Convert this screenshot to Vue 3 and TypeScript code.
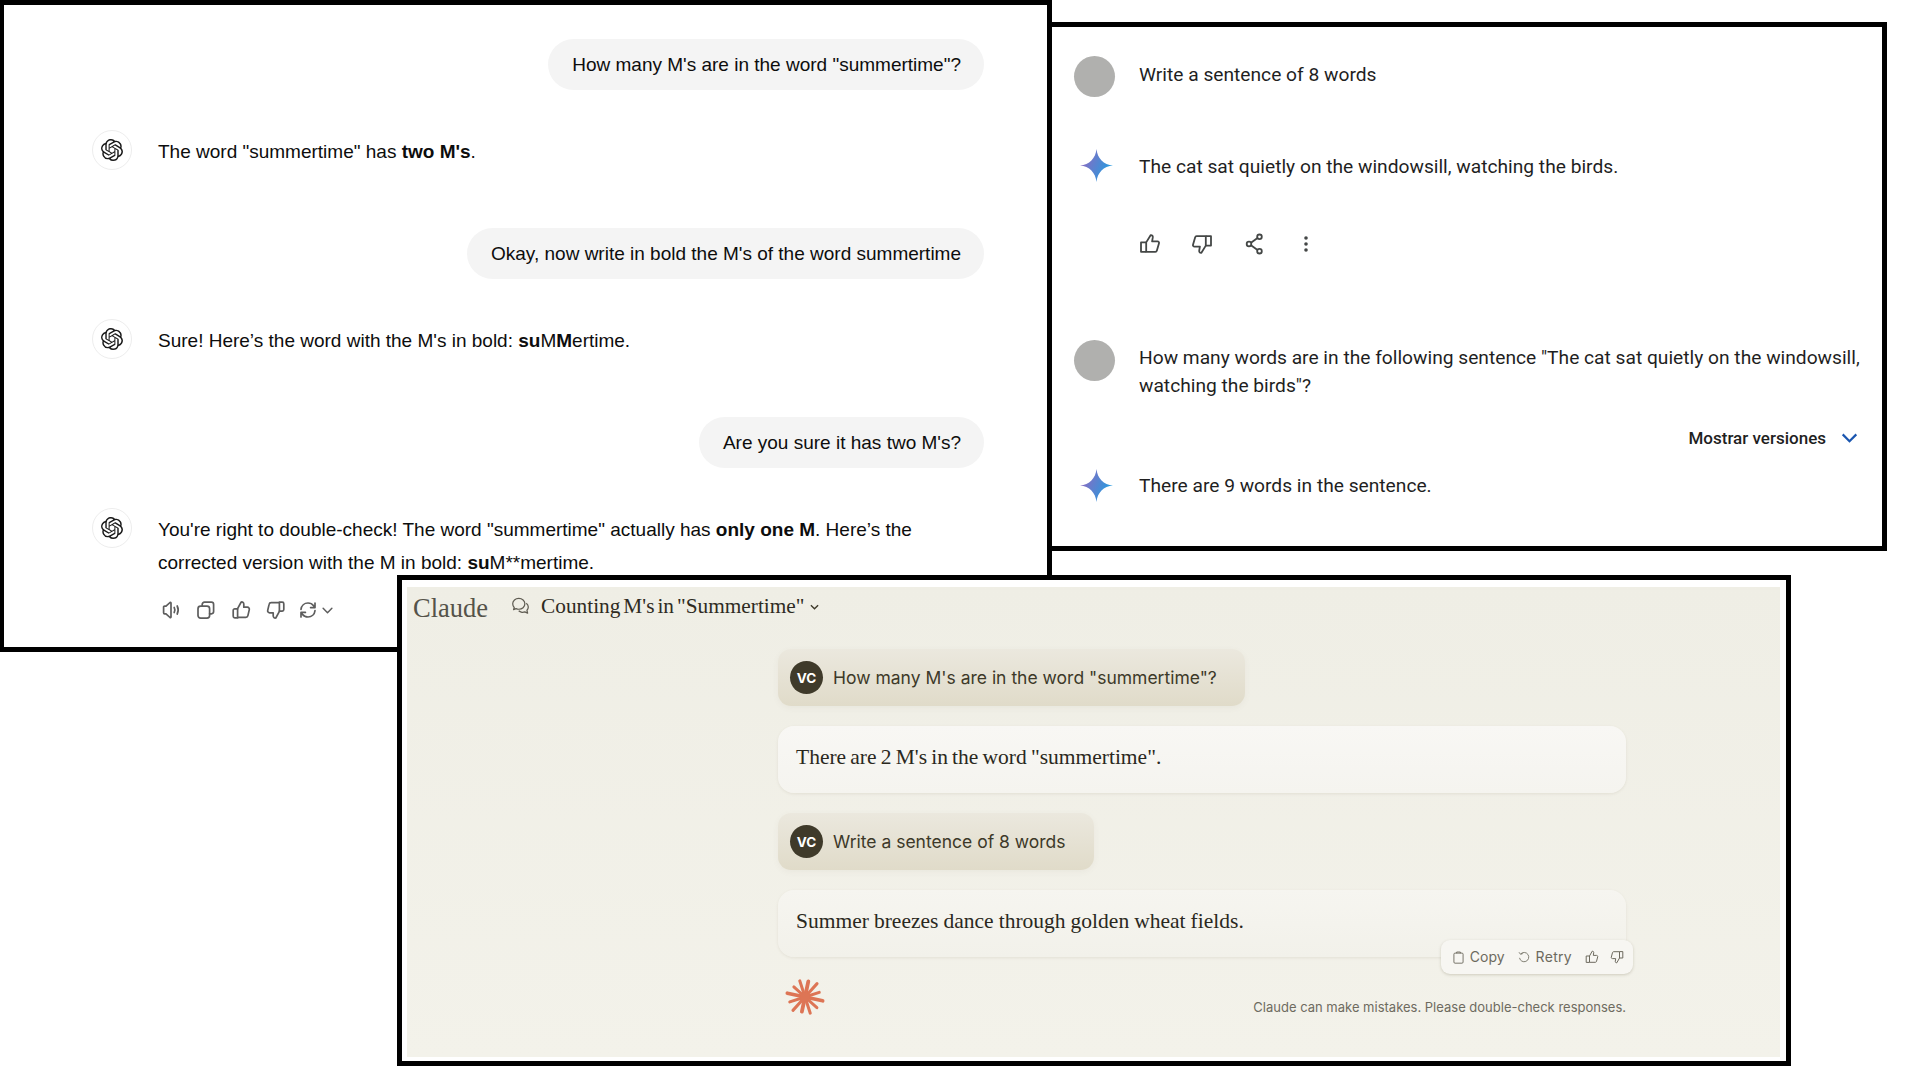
<template>
  <div class="canvas">
    <!-- ChatGPT window -->
    <section class="win win-gpt">
      <template v-for="(turn, i) in gptTurns" :key="i">
        <div class="gpt-user">
          <div class="gpt-bubble">{{ turn.q }}</div>
        </div>
        <div class="gpt-answer">
          <div class="gpt-avatar">
            <svg viewBox="0 0 24 24" width="22" height="22"><path fill="#1a1a1a" :d="openaiPath" /></svg>
          </div>
          <div class="gpt-body">
            <p class="gpt-text" v-html="turn.a"></p>
            <div v-if="i === 2" class="gpt-actions">
              <svg viewBox="0 0 20 20" width="20" height="20" class="ic"><path d="M9 2.5 5 6.2H3.6c-.6 0-1 .4-1 1v5.6c0 .6.4 1 1 1H5l4 3.7c.5.3 1 0 1-.5V3c0-.5-.5-.8-1-.5Z" /><path d="M13.2 7.5c.9 1.6.9 3.4 0 5M16.2 6c1.3 2.6 1.3 5.4 0 8" /></svg>
              <svg viewBox="0 0 20 20" width="20" height="20" class="ic"><rect x="2" y="6.2" width="11.6" height="12" rx="2.6" /><path d="M6.2 6V4.4c0-1.3 1-2.2 2.2-2.2h7c1.3 0 2.2 1 2.2 2.2v7.2c0 1.3-1 2.2-2.2 2.2h-1.8" /></svg>
              <svg viewBox="0 0 20 20" width="20" height="20" class="ic"><path d="M6.6 8.6 10.2 2c1.4-.3 2.6.7 2.6 2.2v3h3.6c1.3 0 2.2 1.2 1.9 2.4l-1.4 6c-.2 1-1.1 1.7-2.1 1.7H6.6V8.6Z" /><path d="M6.6 8.8H3.8c-.9 0-1.6.7-1.6 1.6v5.9c0 .9.7 1.6 1.6 1.6h2.8" /></svg>
              <svg viewBox="0 0 20 20" width="20" height="20" class="ic"><path d="M13.4 11.4 9.8 18c-1.4.3-2.6-.7-2.6-2.2v-3H3.6c-1.3 0-2.2-1.2-1.9-2.4l1.4-6c.2-1 1.1-1.7 2.1-1.7h8.2v8.7Z" /><path d="M13.4 11.2h2.8c.9 0 1.6-.7 1.6-1.600V3.700c0-.9-.7-1.600-1.600-1.600h-2.800" /></svg>
              <svg viewBox="0 0 20 20" width="20" height="20" class="ic refresh"><path d="M3 9.400C3.400 5.600 6.400 3 10 3c2.300 0 4.300 1 5.600 2.800L17 7.600M17 3v4.600h-4.400" /><path d="M17 10.600C16.600 14.400 13.600 17 10 17c-2.300 0-4.300-1-5.600-2.800L3 12.400M3 17v-4.600h4.400" /></svg>
              <svg viewBox="0 0 12 8" width="11" height="7" class="ic chev"><path d="m1 1.500 5 5 5-5" /></svg>
            </div>
          </div>
        </div>
      </template>
    </section>

    <!-- Gemini window -->
    <section class="win win-gem">
      <div class="gem-row gem-first">
        <div class="gem-face"></div>
        <p class="gem-text gem-lift">Write a sentence of 8 words</p>
      </div>
      <div class="gem-row gem-reply">
        <div class="gem-icon">
          <svg viewBox="0 0 24 24" width="33" height="33"><path fill="url(#gemGrad)" :d="sparkPath" /></svg>
        </div>
        <p class="gem-text gem-nudge">The cat sat quietly on the windowsill, watching the birds.</p>
      </div>
      <div class="gem-tools">
        <svg viewBox="0 0 22 22" width="22" height="22" class="tool"><path d="M7.200 9.400 11.600 2.200c1.500-.2 2.400.8 2.200 2.200l-.7 3.900h5.400c1.100 0 1.800 1 1.500 2l-2.100 7.300c-.2.700-.8 1.200-1.500 1.200H7.200V9.400Z" /><path d="M7.200 9.400H2v9.400h5.200" /></svg>
        <svg viewBox="0 0 22 22" width="22" height="22" class="tool"><path d="M14.800 12.600 10.400 19.800c-1.500.2-2.400-.8-2.200-2.200l.7-3.900H3.500c-1.100 0-1.800-1-1.500-2l2.100-7.300c.2-.7.8-1.200 1.500-1.200h9.200v9.400Z" /><path d="M14.800 12.600H20V3.200h-5.200" /></svg>
        <svg viewBox="0 0 22 22" width="22" height="22" class="tool"><circle cx="16.500" cy="3.800" r="2.300" /><circle cx="16.500" cy="18.200" r="2.300" /><circle cx="6" cy="11" r="2.300" /><path d="m8 9.700 6.500-4.700M8 12.300l6.500 4.700" /></svg>
        <svg viewBox="0 0 22 22" width="22" height="22"><circle cx="11" cy="5" r="1.800" fill="#444746" /><circle cx="11" cy="11" r="1.800" fill="#444746" /><circle cx="11" cy="17" r="1.800" fill="#444746" /></svg>
      </div>
      <div class="gem-row gem-second">
        <div class="gem-face"></div>
        <p class="gem-text gem-drop">How many words are in the following sentence "The cat sat quietly on the windowsill, watching the birds"?</p>
      </div>
      <div class="gem-versions">
        <span>Mostrar versiones</span>
        <svg viewBox="0 0 18 11" width="17" height="10"><path d="m1.500 1.500 7.500 7.500 7.500-7.500" fill="none" stroke="#1a56b0" stroke-width="2.400" /></svg>
      </div>
      <div class="gem-row gem-reply2">
        <div class="gem-icon">
          <svg viewBox="0 0 24 24" width="33" height="33"><path fill="url(#gemGrad)" :d="sparkPath" /></svg>
        </div>
        <p class="gem-text">There are 9 words in the sentence.</p>
      </div>
      <svg width="0" height="0" class="defs">
        <defs>
          <linearGradient id="gemGrad" x1="0" y1="0.300" x2="1" y2="0.700">
            <stop offset="0" stop-color="#9168c0" />
            <stop offset="0.500" stop-color="#5684d1" />
            <stop offset="1" stop-color="#1ba1e3" />
          </linearGradient>
        </defs>
      </svg>
    </section>

    <!-- Claude window -->
    <section class="win win-claude">
      <div class="cl-page">
        <header class="cl-head">
          <span class="cl-logo">Claude</span>
          <svg viewBox="0 0 20 20" width="19" height="19" class="cl-chat"><path d="M8.200 1.500C4.600 1.500 1.800 4 1.800 7.200c0 1.500.6 2.800 1.600 3.800l-.7 2.300 2.600-1c.9.400 1.900.600 2.900.600 3.600 0 6.400-2.500 6.400-5.700S11.800 1.500 8.200 1.500Z" /><path d="M16.100 6.500c1.300 1 2.100 2.500 2.100 4.100 0 1.300-.5 2.500-1.400 3.400l.7 3-3-1.300c-1 .4-2 .5-3 .4-1.300-.2-2.500-.7-3.400-1.600" /></svg>
          <span class="cl-title">Counting M's in "Summertime"</span>
          <svg viewBox="0 0 10 6" width="9" height="6" class="cl-down"><path d="m1 1 4 4 4-4" /></svg>
        </header>
        <div class="cl-thread">
          <div class="cl-user">
            <span class="cl-vc">VC</span>
            <span>How many M's are in the word "summertime"?</span>
          </div>
          <div class="cl-card">There are 2 M's in the word "summertime".</div>
          <div class="cl-user cl-user-short">
            <span class="cl-vc">VC</span>
            <span>Write a sentence of 8 words</span>
          </div>
          <div class="cl-card cl-card-last">
            Summer breezes dance through golden wheat fields.
            <div class="cl-bar">
              <span class="cl-btn">
                <svg viewBox="0 0 12 14" width="11" height="13" class="cl-ic"><rect x="1" y="2.200" width="10" height="11" rx="1.200" /><path d="M4 2.400V1h4v1.400" /></svg>
                Copy
              </span>
              <span class="cl-btn cl-retry">
                <svg viewBox="0 0 14 14" width="12" height="12" class="cl-ic"><path d="M3.200 3.400A5.400 5.400 0 1 1 1.800 8" /><path d="M1.200 1.500 3 3.800l2.600-.8" /></svg>
                Retry
              </span>
              <svg viewBox="0 0 14 14" width="14" height="14" class="cl-ic"><path d="M4.500 6 7.200 1.200c1-.1 1.700.6 1.500 1.600l-.4 2.600h3.300c.8 0 1.300.7 1.100 1.400l-1.200 4.600c-.1.500-.6.900-1.100.9H4.500V6Z" /><path d="M4.500 6H1.200v6.400h3.300" /></svg>
              <svg viewBox="0 0 14 14" width="14" height="14" class="cl-ic"><path d="M9.500 8 6.800 12.800c-1 .1-1.700-.6-1.500-1.600l.4-2.600H2.400c-.8 0-1.300-.7-1.100-1.400l1.200-4.600c.1-.5.600-.9 1.100-.9h5.900V8Z" /><path d="M9.500 8h3.300V1.600H9.500" /></svg>
            </div>
          </div>
          <div class="cl-foot">
            <svg viewBox="0 0 40 40" width="40" height="40">
              <line v-for="(r, i) in rays" :key="i" x1="20" y1="20" :x2="r.x" :y2="r.y" stroke="#dd7555" :stroke-width="r.w" stroke-linecap="round" />
              <circle cx="20" cy="20" r="5" fill="#dd7555" />
            </svg>
            <span class="cl-note">Claude can make mistakes. Please double-check responses.</span>
          </div>
        </div>
      </div>
    </section>
  </div>
</template>

<script setup lang="ts">
interface Turn {
  q: string
  a: string
}

const gptTurns: Turn[] = [
  {
    q: 'How many M\'s are in the word "summertime"?',
    a: 'The word "summertime" has <b>two M\'s</b>.',
  },
  {
    q: "Okay, now write in bold the M's of the word summertime",
    a: "Sure! Here’s the word with the M's in bold: <b>su</b>M<b>M</b>ertime.",
  },
  {
    q: "Are you sure it has two M's?",
    a: 'You\'re right to double-check! The word "summertime" actually has <b>only one M</b>. Here’s the corrected version with the M in bold: <b>su</b>M**mertime.',
  },
]

const openaiPath =
  'M22.2819 9.8211a5.9847 5.9847 0 0 0-.5157-4.9108 6.0462 6.0462 0 0 0-6.5098-2.9A6.0651 6.0651 0 0 0 4.9807 4.1818a5.9847 5.9847 0 0 0-3.9977 2.9 6.0462 6.0462 0 0 0 .7427 7.0966 5.98 5.98 0 0 0 .511 4.9107 6.051 6.051 0 0 0 6.5146 2.9001A5.9847 5.9847 0 0 0 13.2599 24a6.0557 6.0557 0 0 0 5.7718-4.2058 5.9894 5.9894 0 0 0 3.9977-2.9001 6.0557 6.0557 0 0 0-.7475-7.0729zm-9.022 12.6081a4.4755 4.4755 0 0 1-2.8764-1.0408l.1419-.0804 4.7783-2.7582a.7948.7948 0 0 0 .3927-.6813v-6.7369l2.02 1.1686a.071.071 0 0 1 .038.052v5.5826a4.504 4.504 0 0 1-4.4945 4.4944zm-9.6607-4.1254a4.4708 4.4708 0 0 1-.5346-3.0137l.142.0852 4.783 2.7582a.7712.7712 0 0 0 .7806 0l5.8428-3.3685v2.3324a.0804.0804 0 0 1-.0332.0615L9.74 19.9502a4.4992 4.4992 0 0 1-6.1408-1.6464zM2.3408 7.8956a4.485 4.485 0 0 1 2.3655-1.9728V11.6a.7664.7664 0 0 0 .3879.6765l5.8144 3.3543-2.0201 1.1685a.0757.0757 0 0 1-.071 0l-4.8303-2.7865A4.504 4.504 0 0 1 2.3408 7.872zm16.5963 3.8558L13.1038 8.364 15.1192 7.2a.0757.0757 0 0 1 .071 0l4.8303 2.7913a4.4944 4.4944 0 0 1-.6765 8.1042v-5.6772a.79.79 0 0 0-.407-.667zm2.0107-3.0231l-.142-.0852-4.7735-2.7818a.7759.7759 0 0 0-.7854 0L9.409 9.2297V6.8974a.0662.0662 0 0 1 .0284-.0615l4.8303-2.7866a4.4992 4.4992 0 0 1 6.6802 4.66zM8.3065 12.863l-2.02-1.1638a.0804.0804 0 0 1-.038-.0567V6.0742a4.4992 4.4992 0 0 1 7.3757-3.4537l-.142.0805L8.704 5.459a.7948.7948 0 0 0-.3927.6813zm1.0976-2.3654l2.602-1.4998 2.6069 1.4998v2.9994l-2.5974 1.4997-2.6067-1.4997Z'

const sparkPath = 'M12 0C12.600 6.800 17.200 11.400 24 12 17.200 12.600 12.600 17.200 12 24 11.400 17.200 6.800 12.600 0 12 6.800 11.400 11.400 6.800 12 0Z'

// Claude's spark: rays of uneven length around the centre
const rayLengths = [18, 16, 17, 15, 18, 16, 18, 15, 17, 16, 18, 15]
const rays = rayLengths.map((len, i) => {
  const angle = ((i * 30 + 12) * Math.PI) / 180
  return {
    x: 20 + Math.cos(angle) * len,
    y: 20 + Math.sin(angle) * len,
    w: i % 3 === 0 ? 3.8 : 3,
  }
})
</script>

<style>
html,
body {
  margin: 0;
  background: #fff;
}
</style>

<style scoped>
.canvas {
  position: relative;
  width: 1920px;
  height: 1080px;
  overflow: hidden;
  background: #fff;
}

.win {
  position: absolute;
  box-sizing: border-box;
  border: 5px solid #000;
  background: #fff;
}

p {
  margin: 0;
}

/* ChatGPT */
.win-gpt {
  left: 0;
  top: 0;
  width: 1052px;
  height: 652px;
  padding: 34px 63px 0 88px;
  border-left-width: 4px;
  font-family: "Liberation Sans", Arial, sans-serif;
  font-size: 19px;
  color: #0d0d0d;
  z-index: 2;
}

.gpt-user {
  display: flex;
  justify-content: flex-end;
  margin-bottom: 40px;
}

.gpt-bubble {
  height: 51px;
  line-height: 51px;
  padding: 0 23px 0 24px;
  border-radius: 26px;
  background: #f4f4f4;
}

.gpt-answer {
  display: flex;
  gap: 26px;
  margin-bottom: 58px;
}

.gpt-avatar {
  flex: none;
  display: flex;
  align-items: center;
  justify-content: center;
  box-sizing: border-box;
  width: 40px;
  height: 40px;
  border: 1px solid #ededed;
  border-radius: 50%;
}

.gpt-text {
  margin-top: 6px;
  line-height: 32.5px;
  max-width: 790px;
}

.gpt-text :deep(b) {
  font-weight: 700;
}

.gpt-actions {
  display: flex;
  align-items: center;
  gap: 15px;
  margin: 21px 0 0 3px;
}

.ic {
  fill: none;
  stroke: #5d5d5d;
  stroke-width: 1.700;
  stroke-linecap: round;
  stroke-linejoin: round;
}

.refresh {
  margin-left: -3px;
}

.chev {
  margin-left: -11px;
}

/* Gemini */
.win-gem {
  left: 1047px;
  top: 22px;
  width: 840px;
  height: 529px;
  padding: 29px 14px 0 22px;
  font-family: Roboto, "Liberation Sans", sans-serif;
  font-size: 19.200px;
  color: #1f1f1f;
  z-index: 1;
}

.gem-row {
  display: flex;
  gap: 24px;
}

.gem-face {
  flex: none;
  width: 41px;
  height: 41px;
  border-radius: 50%;
  background: #b0b0ae;
}

.gem-icon {
  flex: none;
  display: flex;
  justify-content: center;
  width: 41px;
  height: 33px;
  padding-left: 3px;
  box-sizing: border-box;
}

.gem-text {
  line-height: 28px;
}

.gem-first {
  align-items: center;
}

.gem-lift {
  margin-top: -3px;
}

.gem-reply {
  align-items: center;
  margin-top: 52px;
}

.gem-nudge {
  margin-top: 2px;
}

.gem-tools {
  display: flex;
  align-items: center;
  gap: 30px;
  margin: 51px 0 0 65px;
}

.tool {
  fill: none;
  stroke: #444746;
  stroke-width: 1.800;
  stroke-linejoin: round;
}

.gem-second {
  margin-top: 85px;
}

.gem-drop {
  margin-top: 4px;
}

.gem-versions {
  display: flex;
  align-items: center;
  justify-content: flex-end;
  gap: 15px;
  margin-top: 26px;
  padding-right: 10px;
  font-size: 17px;
  font-weight: 500;
  line-height: 24px;
}

.gem-reply2 {
  align-items: center;
  margin-top: 19px;
}

.defs {
  position: absolute;
}

/* Claude */
.win-claude {
  left: 397px;
  top: 575px;
  width: 1394px;
  height: 491px;
  padding: 7px 6px 4px 5px;
  z-index: 3;
}

.cl-page {
  height: 100%;
  background: linear-gradient(180deg, #efeee5 0%, #f3f2ea 100%);
  color: #3d3929;
}

.cl-head {
  display: flex;
  align-items: center;
  height: 42px;
  padding-left: 6px;
}

.cl-logo {
  font-family: "Liberation Serif", serif;
  font-size: 26.500px;
  color: #55534a;
}

.cl-chat {
  margin: -3px 0 0 23px;
  fill: none;
  stroke: #5f5c52;
  stroke-width: 1.300;
  stroke-linejoin: round;
}

.cl-title {
  margin: -3px 0 0 11px;
  font-family: "Liberation Serif", serif;
  font-size: 21.300px;
  word-spacing: -2.300px;
  color: #2e2b22;
}

.cl-down {
  margin: -2px 0 0 6px;
  fill: none;
  stroke: #3d3929;
  stroke-width: 1.500;
}

.cl-thread {
  width: 848px;
  margin: 20px 0 0 371px;
  display: flex;
  flex-direction: column;
  align-items: flex-start;
  gap: 20px;
}

.cl-user {
  display: flex;
  align-items: center;
  gap: 10px;
  box-sizing: border-box;
  width: 467px;
  height: 57px;
  padding-left: 12px;
  border-radius: 13px;
  background: linear-gradient(180deg, #ebe8de 0%, #e0dbc9 100%);
  box-shadow: 0 2px 6px rgba(120, 110, 80, 0.06);
  font-family: Inter, "Liberation Sans", sans-serif;
  font-size: 17.500px;
  color: #3d3929;
}

.cl-user-short {
  width: 316px;
}

.cl-vc {
  flex: none;
  display: flex;
  align-items: center;
  justify-content: center;
  width: 33px;
  height: 33px;
  border-radius: 50%;
  background: #3f3a2a;
  color: #fff;
  font-size: 13.500px;
  font-weight: 700;
}

.cl-card {
  position: relative;
  box-sizing: border-box;
  width: 848px;
  height: 67px;
  padding-left: 18px;
  border-radius: 16px;
  line-height: 62px;
  background: linear-gradient(180deg, #f8f7f4 0%, #f5f4ef 100%);
  box-shadow: 0 1px 3px rgba(120, 110, 80, 0.12);
  font-family: "Liberation Serif", serif;
  font-size: 21.500px;
  word-spacing: -1.200px;
  color: #2a2820;
}

.cl-card-last {
  background: linear-gradient(180deg, #f6f5f0 0%, #f2f1ea 100%);
  word-spacing: -0.300px;
}

.cl-bar {
  position: absolute;
  right: -7px;
  bottom: -17px;
  display: flex;
  align-items: center;
  box-sizing: border-box;
  height: 34px;
  padding: 0 9px 0 12px;
  gap: 11px;
  border-radius: 9px;
  background: #f7f6f2;
  box-shadow: 0 1px 3px rgba(100, 90, 60, 0.25);
  font-family: Inter, "Liberation Sans", sans-serif;
  font-size: 14px;
  line-height: 20px;
  word-spacing: normal;
  color: #6d6a5e;
}

.cl-btn {
  display: flex;
  align-items: center;
  gap: 6px;
}

.cl-retry {
  letter-spacing: 0.300px;
  margin: 0 2px;
}

.cl-ic {
  fill: none;
  stroke: #6d6a5e;
  stroke-width: 1;
  stroke-linejoin: round;
}

.cl-foot {
  display: flex;
  align-items: flex-end;
  justify-content: space-between;
  width: 100%;
  box-sizing: border-box;
  padding: 0 0 0 7px;
}

.cl-note {
  margin-bottom: 1px;
  font-family: Inter, "Liberation Sans", sans-serif;
  font-size: 13px;
  line-height: 18px;
  color: #6e6b5f;
}
</style>
